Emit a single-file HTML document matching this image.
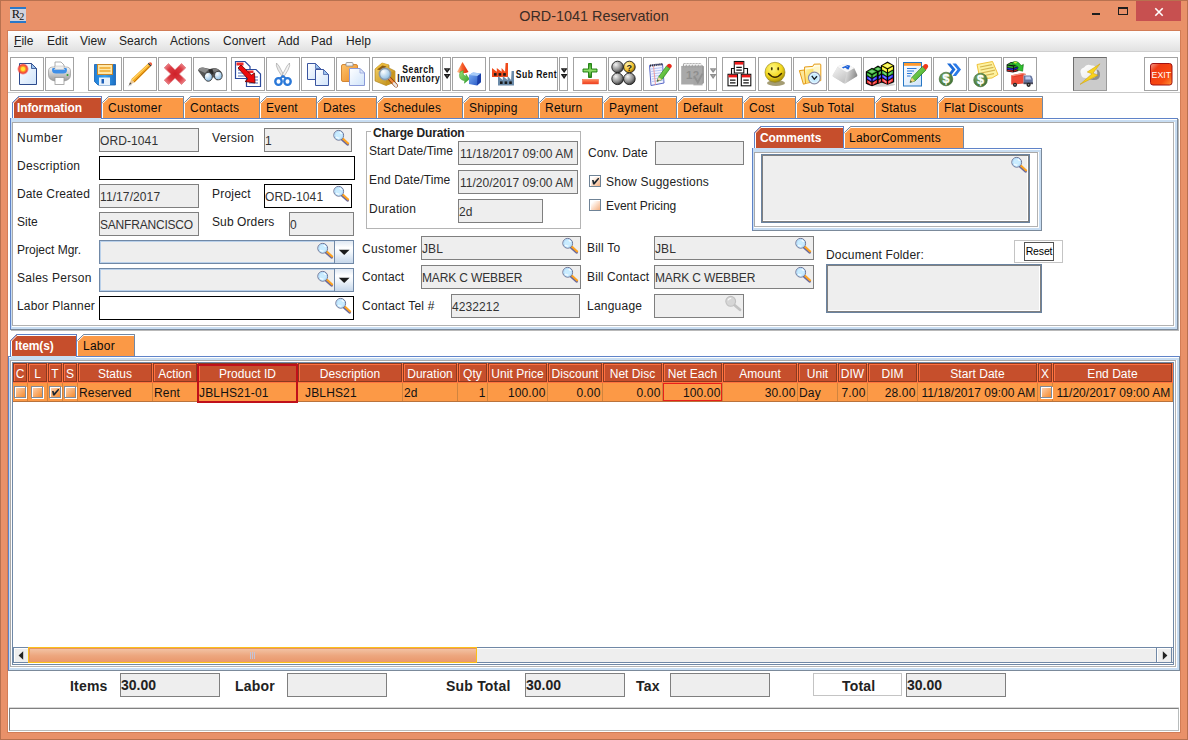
<!DOCTYPE html><html><head><meta charset="utf-8"><title>ORD-1041 Reservation</title><style>
*{box-sizing:border-box;margin:0;padding:0}
html,body{width:1188px;height:740px;overflow:hidden}
body{background:#E99169;font-family:"Liberation Sans",Arial,sans-serif;font-size:12px;color:#222;position:relative;letter-spacing:0.25px}
.a{position:absolute}
.t{position:absolute;white-space:nowrap;line-height:14px;height:14px}
.b{font-weight:bold}
#frame{left:0;top:0;width:1188px;height:740px;border:1px solid #B8714F;border-bottom-color:#B8714F}
#title{left:0;top:5.5px;width:1188px;text-align:center;font-size:14.4px;line-height:20px;height:20px;color:#3a2c26;letter-spacing:0}
#client{left:8px;top:31px;width:1172px;height:701px;background:#fff;overflow:hidden;box-shadow:0 0 0 1px #d27d57}
#menubar{left:0;top:0;width:1172px;height:21px;background:linear-gradient(#ffffff,#f4f4f4 40%,#e2e2e2);border-bottom:1px solid #cfcfcf}
#menubar .t{top:3px;font-size:12px;line-height:14px;height:14px;letter-spacing:0.05px;color:#222}
#toolbar{left:0;top:21px;width:1172px;height:41px;background:#fff;border-bottom:1px solid #c9c9c9}
.tb{position:absolute;top:5px;height:34px;width:34px;border:1px solid #a3a3a3;background:#fff}
.tb svg{position:absolute;left:0;top:0}
.fld{position:absolute;height:24px;border:1px solid #7f7f7f;background:#eeeeee;padding:5px 0 0 0;line-height:14px;white-space:nowrap;overflow:hidden;color:#333;letter-spacing:0.1px}
.wfld{background:#fff;border-color:#000}
.bfld{border-color:#7a9cc4;background:#eeeeee}
.tab{position:absolute;height:22px;top:0}
.tab svg{position:absolute;left:0;top:0}
.tab span{position:absolute;left:6px;top:5px;line-height:14px;white-space:nowrap;color:#0a0a0a}
.tab.sel span{color:#fff;font-weight:bold;letter-spacing:-0.1px;left:5px}
.th{position:absolute;top:0;height:19px;background:#C64F2C;color:#fff;text-align:center;line-height:14px;padding-top:3px;border:1px solid #8c3a20;box-shadow:inset 1px 1px 0 #ff7040;white-space:nowrap;overflow:hidden;letter-spacing:0.03px}
.td{position:absolute;top:20px;height:18px;color:#111;line-height:14px;padding-top:2.5px;border-right:1px solid #cf843f;white-space:nowrap;overflow:hidden;padding-left:1px;letter-spacing:0.15px}
.td.r{text-align:right;padding-right:1.5px}
.cb{position:absolute;width:12px;height:12px;border:1px solid #7f8a99;background:linear-gradient(135deg,#fccaa4 15%,#f7923a 90%);box-shadow:1px 1px 0 #fff, inset 1px 1px 0 #fff}
.cbf{background:linear-gradient(135deg,#ffffff 22%,#f6b588 95%);border-color:#6f8396;box-shadow:inset 1px 1px 0 #fff}
.tot{position:absolute;font-weight:bold;font-size:14px;line-height:16px;white-space:nowrap;letter-spacing:0.2px;color:#222}
</style></head><body>
<div id="frame" class="a"></div>
<div class="a" style="left:10px;top:7px;width:16px;height:16px;background:#d3d3dc;border-top:2px solid #2a78c8;border-bottom:2px solid #2a78c8;font-family:'Liberation Serif',serif;font-size:12.5px;line-height:11px;color:#111;letter-spacing:-0.8px;text-align:center;overflow:hidden"><span style="position:relative;top:0px;left:-0.5px">R<span style="font-size:10px;position:relative;top:1.5px">2</span></span></div>
<div id="title" class="a">ORD-1041 Reservation</div>
<div class="a" style="left:1092px;top:13px;width:8px;height:2px;background:#1e1e1e"></div>
<div class="a" style="left:1118px;top:7px;width:10px;height:8px;border:1px solid #1e1e1e;border-top-width:2px"></div>
<div class="a" style="left:1136px;top:1px;width:45px;height:20px;background:#C75050"></div>
<svg class="a" style="left:1154px;top:7px" width="10" height="10" viewBox="0 0 10 10"><path d="M1.3 1.3 L8.7 8.7 M8.7 1.3 L1.3 8.7" stroke="#fff" stroke-width="1.6" fill="none"/></svg>
<div id="client" class="a">
<div id="menubar" class="a">
<div class="t" style="left:6px"><u>F</u>ile</div>
<div class="t" style="left:39px">Edit</div>
<div class="t" style="left:72px">View</div>
<div class="t" style="left:111px">Search</div>
<div class="t" style="left:162px">Actions</div>
<div class="t" style="left:215px">Convert</div>
<div class="t" style="left:270px">Add</div>
<div class="t" style="left:303px">Pad</div>
<div class="t" style="left:338px">Help</div>
</div>
<div id="toolbar" class="a">
<svg width="0" height="0" style="position:absolute"><defs>
<linearGradient id="gDoc" x1="0" y1="0" x2="1" y2="1"><stop offset="0" stop-color="#ffffff"/><stop offset="1" stop-color="#cfe3fa"/></linearGradient>
<linearGradient id="gBlue" x1="0" y1="0" x2="1" y2="0"><stop offset="0" stop-color="#1f7fd8"/><stop offset="0.5" stop-color="#3aa0ee"/><stop offset="1" stop-color="#1b6fc4"/></linearGradient>
<linearGradient id="gGrayV" x1="0" y1="0" x2="0" y2="1"><stop offset="0" stop-color="#fafafa"/><stop offset="1" stop-color="#9a9a9a"/></linearGradient>
<radialGradient id="gRedX" cx="0.5" cy="0.5" r="0.6"><stop offset="0" stop-color="#cf1f28"/><stop offset="0.6" stop-color="#db3a42"/><stop offset="1" stop-color="#ee8a8e"/></radialGradient>
<radialGradient id="gSun" cx="0.5" cy="0.5" r="0.5"><stop offset="0" stop-color="#ffe838"/><stop offset="0.35" stop-color="#ffb020"/><stop offset="0.7" stop-color="#f0403a"/><stop offset="1" stop-color="#f0403a" stop-opacity="0"/></radialGradient>
<radialGradient id="gBall" cx="0.35" cy="0.3" r="0.8"><stop offset="0" stop-color="#f4f4f4"/><stop offset="0.6" stop-color="#8a8a8a"/><stop offset="1" stop-color="#222"/></radialGradient>
<radialGradient id="gBallY" cx="0.35" cy="0.3" r="0.8"><stop offset="0" stop-color="#fff4b0"/><stop offset="0.6" stop-color="#f3c029"/><stop offset="1" stop-color="#6a4a00"/></radialGradient>
<radialGradient id="gSmile" cx="0.4" cy="0.3" r="0.8"><stop offset="0" stop-color="#fffb8a"/><stop offset="0.55" stop-color="#f2d61c"/><stop offset="1" stop-color="#8a7400"/></radialGradient>
<radialGradient id="gLens" cx="0.35" cy="0.3" r="0.8"><stop offset="0" stop-color="#ffffff"/><stop offset="1" stop-color="#7db4e0"/></radialGradient>
<linearGradient id="gOrange" x1="0" y1="0" x2="1" y2="1"><stop offset="0" stop-color="#ffc36a"/><stop offset="1" stop-color="#e88a28"/></linearGradient>
<linearGradient id="gGold" x1="0" y1="0" x2="1" y2="1"><stop offset="0" stop-color="#f7d36a"/><stop offset="1" stop-color="#b8860f"/></linearGradient>
<linearGradient id="gGreenP" x1="0" y1="0" x2="0" y2="1"><stop offset="0" stop-color="#2f9a1c"/><stop offset="0.5" stop-color="#8fdc6a"/><stop offset="1" stop-color="#1f7f10"/></linearGradient>
<linearGradient id="gRedM" x1="0" y1="0" x2="0" y2="1"><stop offset="0" stop-color="#ff8a5a"/><stop offset="1" stop-color="#ee3a1a"/></linearGradient>
<linearGradient id="gCubeB" x1="0" y1="0" x2="1" y2="1"><stop offset="0" stop-color="#7fb2f5"/><stop offset="1" stop-color="#1f4fc0"/></linearGradient>
<linearGradient id="gCone" x1="0" y1="0" x2="1" y2="0"><stop offset="0" stop-color="#ffc89a"/><stop offset="0.45" stop-color="#f8602a"/><stop offset="1" stop-color="#d8260c"/></linearGradient>
<linearGradient id="gGreenA" x1="0" y1="0" x2="1" y2="1"><stop offset="0" stop-color="#9be07a"/><stop offset="1" stop-color="#2fa02a"/></linearGradient>
<linearGradient id="gExit" x1="0" y1="0" x2="1" y2="1"><stop offset="0" stop-color="#f4a090"/><stop offset="0.25" stop-color="#f03a12"/><stop offset="0.7" stop-color="#f84a10"/><stop offset="1" stop-color="#ff9838"/></linearGradient>
<radialGradient id="gDollar" cx="0.4" cy="0.35" r="0.7"><stop offset="0" stop-color="#7fae6a"/><stop offset="1" stop-color="#3f6f34"/></radialGradient>
<linearGradient id="gKey" x1="0" y1="0" x2="1" y2="1"><stop offset="0" stop-color="#ffffff"/><stop offset="1" stop-color="#9c9c9c"/></linearGradient>
<linearGradient id="gFolder" x1="0" y1="0" x2="1" y2="1"><stop offset="0" stop-color="#fff2b0"/><stop offset="1" stop-color="#f0c24a"/></linearGradient>
<linearGradient id="gPencilG" x1="0" y1="0" x2="1" y2="1"><stop offset="0" stop-color="#9be86a"/><stop offset="1" stop-color="#2f9a1c"/></linearGradient>
<linearGradient id="gCloud" x1="0" y1="0" x2="1" y2="1"><stop offset="0" stop-color="#ffffff"/><stop offset="0.6" stop-color="#f2f2f2"/><stop offset="1" stop-color="#bdbdbd"/></linearGradient>
<linearGradient id="gKeyR" x1="0" y1="0" x2="1" y2="0.3"><stop offset="0" stop-color="#f2f2f2"/><stop offset="1" stop-color="#8c8c8c"/></linearGradient>
<linearGradient id="gKeyL" x1="0" y1="0" x2="0.6" y2="1"><stop offset="0" stop-color="#f4f4f4"/><stop offset="1" stop-color="#c4c4c4"/></linearGradient>
<linearGradient id="gFolder2" x1="0" y1="0" x2="1" y2="1"><stop offset="0" stop-color="#fff6a8"/><stop offset="1" stop-color="#f8cc3a"/></linearGradient>
</defs></svg>
<div class="tb" style="left:2px;width:34px;"><svg style="left:-1px;top:-1px" width="34" height="34" viewBox="0 0 34 34"><path d="M9.5 6.5 H21.5 L26.5 11.5 V27.5 H9.5 Z" fill="url(#gDoc)" stroke="#2c4a8c" stroke-width="1"/><path d="M21.5 6.5 V11.5 H26.5 Z" fill="#9cc4ee" stroke="#2c4a8c" stroke-width="0.8"/><circle cx="13" cy="12" r="6" fill="url(#gSun)"/><circle cx="13" cy="12" r="2" fill="#ffe43a"/></svg></div>
<div class="tb" style="left:37px;width:29px;"><svg style="left:-1px;top:-1px" width="29" height="34" viewBox="0 0 29 34"><path d="M10 5 H16 L19 8 V13 H10 Z" fill="#fff" stroke="#9a9a9a" stroke-width="0.8"/><path d="M3.5 14 Q3.5 10 8 10 H21 Q25.5 10 25.5 14 V18 Q25.5 23 19 24 H10 Q3.5 23 3.5 18 Z" fill="url(#gGrayV)" stroke="#8a8a8a" stroke-width="0.6"/><path d="M8 11 H21 Q22 11 22 13 Q22 16.5 18 16.5 H11 Q7 16.5 7 13 Q7 11 8 11Z" fill="#3f8fe8"/><path d="M9 12 H20 V13 H9Z" fill="#8fc4ff"/><rect x="10" y="9" width="9" height="3.5" fill="#eee" stroke="#aaa" stroke-width="0.4"/><circle cx="22.5" cy="18" r="1" fill="#2fa02a"/><rect x="10" y="20.5" width="9" height="7" fill="#fff" stroke="#9a9a9a" stroke-width="0.8"/></svg></div>
<div class="tb" style="left:80px;width:34px;"><svg style="left:-1px;top:-1px" width="34" height="34" viewBox="0 0 34 34"><path d="M6.5 7.5 H27.5 V28 H10 L6.5 24.5 Z" fill="url(#gBlue)" stroke="#1560b0" stroke-width="0.8"/><rect x="9.5" y="7.5" width="15" height="10" fill="#ffe7a8" stroke="#c8882a" stroke-width="1"/><path d="M11.5 11 H22.5 M11.5 14 H22.5" stroke="#f0a82a" stroke-width="1.6"/><rect x="11" y="20.5" width="11" height="7.5" fill="#e8f2fc"/><rect x="13.5" y="22" width="2.5" height="4.5" fill="#1f60b8"/></svg></div>
<div class="tb" style="left:115px;width:34px;"><svg style="left:-1px;top:-1px" width="34" height="34" viewBox="0 0 34 34"><path d="M6 28 L8.2 22.2 L11.6 25.6 Z" fill="#e8c89a"/><path d="M6 28 L7 25.3 L8.6 26.9 Z" fill="#444"/><path d="M9 27.5 L5 29" stroke="#ccc" stroke-width="1.2" opacity="0.7"/><path d="M8.2 22.2 L24.8 6.8 L27.6 9.6 L11.6 25.6 Z" fill="#f5a81c"/><path d="M9.2 23 L25.6 7.7" stroke="#ffd66a" stroke-width="1.1"/><path d="M11 25 L27.2 9" stroke="#b86a0a" stroke-width="0.9"/><path d="M24.8 6.8 L25.8 5.8 L28.6 8.6 L27.6 9.6 Z" fill="#333"/><path d="M25.8 5.8 Q27.2 4.6 28.6 5.8 Q29.8 7.2 28.6 8.6 Z" fill="#f05a3a"/></svg></div>
<div class="tb" style="left:150px;width:34px;"><svg style="left:-1px;top:-1px" width="34" height="34" viewBox="0 0 34 34"><path d="M10.5 6.5 L17 12.8 L23.5 6.5 L27.8 10.8 L21.3 17 L27.8 23.2 L23.5 27.5 L17 21.2 L10.5 27.5 L6.2 23.2 L12.7 17 L6.2 10.8 Z" fill="url(#gRedX)" stroke="#e07a80" stroke-width="0.8" stroke-linejoin="round"/></svg></div>
<div class="tb" style="left:185px;width:34px;"><svg style="left:-1px;top:-1px" width="34" height="34" viewBox="0 0 34 34"><path d="M5 13.5 Q6 10 10 10.5 L17 12 L21 11 Q25 11 28.5 15 L29.5 19 L24 23.5 L20 20 L19 21 L15 24.5 L10.5 21 Z" fill="#555"/><path d="M5.5 13 Q7 10 10.5 10.8 L16 12.3 L12 16 Z" fill="#8c8c8c"/><path d="M17.5 12 L21.5 11.2 Q24 11.2 26 13 L22 15.5 Z" fill="#7c7c7c"/><path d="M15.5 12.5 L19.5 12 L20.5 17 L17 18 Z" fill="#2a2a2a"/><ellipse cx="15.3" cy="19.8" rx="4" ry="4.4" fill="url(#gLens)" stroke="#444" stroke-width="1"/><ellipse cx="25.3" cy="18.6" rx="3.8" ry="4.2" fill="url(#gLens)" stroke="#444" stroke-width="1"/></svg></div>
<div class="tb" style="left:223px;width:34px;"><svg style="left:-1px;top:-1px" width="34" height="34" viewBox="0 0 34 34"><path d="M4.5 4.5 H14 L19 9.5 V21.5 H4.5 Z" fill="#fff" stroke="#2c4a9c" stroke-width="1.2"/><rect x="5.5" y="5.5" width="7" height="3" fill="#ee2a2a"/><path d="M7 13 H16 M7 16 H16 M7 19 H16" stroke="#4a6ab8" stroke-width="1"/><path d="M15.5 12.5 H25 L29.5 17 V29.5 H15.5 Z" fill="#fff" stroke="#2c4a9c" stroke-width="1.2"/><rect x="16.5" y="13.5" width="6" height="2.5" fill="#ee2a2a"/><path d="M18 20 H27 M18 23 H27 M18 26 H27" stroke="#4a6ab8" stroke-width="1"/><path d="M7 11 L10 8 L20.5 18 L23.5 16 L24 26 L14 24.5 L17 22 Z" fill="#ee0a0a" stroke="#5a0000" stroke-width="0.8"/></svg></div>
<div class="tb" style="left:258px;width:34px;"><svg style="left:-1px;top:-1px" width="34" height="34" viewBox="0 0 34 34"><path d="M10.5 6 Q9.5 8 12 13 L17 21 L18.5 19.5 L13 9 Z" fill="#e8e8e8" stroke="#9a9a9a" stroke-width="0.6"/><path d="M23.5 6 Q24.5 8 22 13 L17 21 L15.5 19.5 L21 9 Z" fill="#f4f4f4" stroke="#9a9a9a" stroke-width="0.6"/><ellipse cx="12.5" cy="24.5" rx="3.2" ry="3.4" fill="none" stroke="#2a78d8" stroke-width="2.4"/><ellipse cx="21.5" cy="24.5" rx="3.2" ry="3.4" fill="none" stroke="#2a78d8" stroke-width="2.4"/><path d="M14 21.5 L17 19 L20 21.5" stroke="#2a78d8" stroke-width="2" fill="none"/></svg></div>
<div class="tb" style="left:293px;width:34px;"><svg style="left:-1px;top:-1px" width="34" height="34" viewBox="0 0 34 34"><path d="M6.5 6.5 H14.5 L19.5 11.5 V22.5 H6.5 Z" fill="url(#gDoc)" stroke="#3a55a0" stroke-width="1"/><path d="M14.5 6.5 V11.5 H19.5 Z" fill="#9cc4ee" stroke="#3a55a0" stroke-width="0.7"/><path d="M14.5 12.5 H22.5 L27.5 17.5 V28.5 H14.5 Z" fill="url(#gDoc)" stroke="#3a55a0" stroke-width="1"/><path d="M22.5 12.5 V17.5 H27.5 Z" fill="#9cc4ee" stroke="#3a55a0" stroke-width="0.7"/></svg></div>
<div class="tb" style="left:328px;width:34px;"><svg style="left:-1px;top:-1px" width="34" height="34" viewBox="0 0 34 34"><rect x="5.5" y="7.5" width="16" height="17" rx="1.5" fill="url(#gOrange)" stroke="#c8741a" stroke-width="0.8"/><path d="M10 9 V6.5 Q10 5.5 11 5.5 H16 Q17 5.5 17 6.5 V9 Z" fill="#f4f4f4" stroke="#8a8a8a" stroke-width="0.8"/><path d="M13.5 11.5 H24 L28.5 16 V28.5 H13.5 Z" fill="url(#gDoc)" stroke="#8a9ad8" stroke-width="1"/><path d="M24 11.5 V16 H28.5 Z" fill="#dfeafa" stroke="#8a9ad8" stroke-width="0.7"/></svg></div>
<div class="tb" style="left:364px;width:69px;"><svg style="left:-1px;top:-1px" width="69" height="34" viewBox="0 0 69 34"><path d="M3 12 L10 6 L17 8 L17 11 L23 14 L23 25 L14 28.5 L3 24 Z" fill="url(#gGold)" stroke="#a87a10" stroke-width="0.6"/><path d="M3 12 L10 6 L17 8 L10 13 Z" fill="#e8b83a"/><path d="M5 12.5 L10.5 8.5 L14.5 9.5 L9.5 13.5 Z" fill="#8a5a10"/><path d="M14 28.5 L14 17 L23 14 L23 25 Z" fill="#c8961f"/><path d="M17 21 L24 28.5" stroke="#8a3a10" stroke-width="4" stroke-linecap="round"/><path d="M17 21 L24 28.5" stroke="#f08a3a" stroke-width="2.4" stroke-linecap="round"/><path d="M22 26.5 L24 28.7" stroke="#e8e8e8" stroke-width="2.6" stroke-linecap="round"/><circle cx="13" cy="17" r="5.6" fill="url(#gLens)" stroke="#8a9aaa" stroke-width="1.6"/><text transform="translate(30.2 15.6) scale(0.86 1.04)" font-family="Liberation Sans,Arial,sans-serif" font-weight="bold" font-size="10" fill="#111" lengthAdjust="spacing" textLength="37">Search</text><text transform="translate(25.3 24.6) scale(0.86 1.04)" font-family="Liberation Sans,Arial,sans-serif" font-weight="bold" font-size="10" fill="#111" lengthAdjust="spacing" textLength="49.6">Inventory</text></svg></div>
<div class="tb" style="left:434px;width:9px;"><svg style="left:-1px;top:-1px" width="9" height="34" viewBox="0 0 9 34"><path d="M2.1 11.2 H8.1 V11.9 L5.1 15.9 L2.1 11.9 Z" fill="#1a1a1a"/><path d="M2.1 17.1 H8.1 V17.8 L5.1 21.9 L2.1 17.8 Z" fill="#1a1a1a"/><path d="M4.5 12.6 H5.7 L5.1 13.5 Z M4.5 18.5 H5.7 L5.1 19.4 Z" fill="#fff" opacity="0.9"/></svg></div>
<div class="tb" style="left:444px;width:34px;"><svg style="left:-1px;top:-1px" width="34" height="34" viewBox="0 0 34 34"><path d="M10.5 5 L16.5 15 Q11 17.5 5 15 Z" fill="url(#gCone)"/><path d="M8.2 14.8 L11.4 13.6 Q10.2 18.4 14 19.4 L14 17.2 L17.4 22 L12.4 26.2 L12.8 23.8 Q5.4 22.8 8.2 14.8 Z" fill="url(#gGreenA)" stroke="#2f9a22" stroke-width="0.5"/><path d="M17 18 L21 15.5 L29 16.5 L29 25 L25 28.5 L17 27 Z" fill="url(#gCubeB)"/><path d="M17 18 L21 15.5 L29 16.5 L25.5 19 Z" fill="#a8ccf8"/><path d="M25.5 19 L29 16.5 L29 25 L25 28.5 Z" fill="#1a3fa8"/></svg></div>
<div class="tb" style="left:481px;width:69px;"><svg style="left:-1px;top:-1px" width="69" height="34" viewBox="0 0 69 34"><path d="M3 20 V10.899999999999999 L7.8 14.68 V10.899999999999999 L12.6 14.68 V10.899999999999999 L16.066666666666666 14.68 L16.599999999999998 6 H19 V20 Z" fill="#f04a1a"/><rect x="5.0" y="16.1" width="2.6" height="2.6" fill="#1a1a1a"/><rect x="9.6" y="16.1" width="2.6" height="2.6" fill="#1a1a1a"/><rect x="14.2" y="16.1" width="2.6" height="2.6" fill="#1a1a1a"/><path d="M9 28.5 V19.075 L13.8 22.990000000000002 V19.075 L18.6 22.990000000000002 V19.075 L22.066666666666666 22.990000000000002 L22.599999999999998 14 H25 V28.5 Z" fill="#6a8aa8"/><rect x="11.0" y="24.4" width="2.6" height="2.6" fill="#1a1a1a"/><rect x="15.6" y="24.4" width="2.6" height="2.6" fill="#1a1a1a"/><rect x="20.2" y="24.4" width="2.6" height="2.6" fill="#1a1a1a"/><text transform="translate(26.8 20.8) scale(0.86 1.04)" font-family="Liberation Sans,Arial,sans-serif" font-weight="bold" font-size="10" fill="#111" lengthAdjust="spacing" textLength="47.6">Sub Rent</text></svg></div>
<div class="tb" style="left:551px;width:9px;"><svg style="left:-1px;top:-1px" width="9" height="34" viewBox="0 0 9 34"><path d="M2.1 11.2 H8.1 V11.9 L5.1 15.9 L2.1 11.9 Z" fill="#1a1a1a"/><path d="M2.1 17.1 H8.1 V17.8 L5.1 21.9 L2.1 17.8 Z" fill="#1a1a1a"/><path d="M4.5 12.6 H5.7 L5.1 13.5 Z M4.5 18.5 H5.7 L5.1 19.4 Z" fill="#fff" opacity="0.9"/></svg></div>
<div class="tb" style="left:565px;width:34px;"><svg style="left:-1px;top:-1px" width="34" height="34" viewBox="0 0 34 34"><path d="M15.5 6.5 H18.5 V12 H24 V15 H18.5 V20.5 H15.5 V15 H10 V12 H15.5 Z" fill="url(#gGreenP)" stroke="#1a7a0a" stroke-width="0.9"/><rect x="9.5" y="22.5" width="16" height="4.5" fill="url(#gRedM)" stroke="#ee5a3a" stroke-width="0.5"/></svg></div>
<div class="tb" style="left:600px;width:34px;"><svg style="left:-1px;top:-1px" width="34" height="34" viewBox="0 0 34 34"><circle cx="9.6" cy="10" r="5.8" fill="url(#gBall)" stroke="#1a1a1a" stroke-width="0.9"/><circle cx="21.4" cy="10" r="5.8" fill="url(#gBallY)" stroke="#1a1a1a" stroke-width="0.9"/><circle cx="9.6" cy="21.8" r="5.8" fill="url(#gBall)" stroke="#1a1a1a" stroke-width="0.9"/><circle cx="21.4" cy="21.8" r="5.8" fill="url(#gBall)" stroke="#1a1a1a" stroke-width="0.9"/><text x="18.6" y="13.6" font-family="Liberation Sans,Arial,sans-serif" font-weight="bold" font-size="9" fill="#222">?</text></svg></div>
<div class="tb" style="left:635px;width:34px;"><svg style="left:-1px;top:-1px" width="34" height="34" viewBox="0 0 34 34"><path d="M6.5 8.5 L19.5 7 L21 26 L8 28.5 Z" fill="#f4f4ff" stroke="#5a6ac8" stroke-width="1"/><path d="M8 12 L19.8 10.5 M8.2 14.5 L20 13 M8.4 17 L20.2 15.5 M8.6 19.5 L20.4 18 M8.8 22 L20.6 20.5 M9 24.5 L20.8 23" stroke="#9ab0f0" stroke-width="0.7"/><path d="M10.5 9 L12.5 28" stroke="#f08a8a" stroke-width="0.8"/><path d="M7 8.6 L19.5 7.2" stroke="#2a2a2a" stroke-width="2.2" stroke-dasharray="1 0.9"/><path d="M14 24.5 L15.5 20 L23.5 9 L27 11.5 L19 22.5 Z" fill="url(#gPencilG)" stroke="#1a7a0a" stroke-width="0.6"/><path d="M14 24.5 L15.5 20 L19 22.5 Z" fill="#f0d8a8"/><path d="M14 24.5 L14.6 22.6 L16 23.6 Z" fill="#333"/><path d="M23.5 9 Q25.5 5.5 28 7.5 Q30 9.5 27 11.5 Z" fill="#e82a1a"/></svg></div>
<div class="tb" style="left:670px;width:29px;"><svg style="left:-1px;top:-1px" width="29" height="34" viewBox="0 0 29 34"><path d="M3.2 9 L24 8.2 L25.8 9.6 L25.8 26 L23.5 27.4 L3.2 27.4 Z" fill="#a9a9a9"/><path d="M24 8.2 L25.8 9.6 L25.8 26 L24 27 Z" fill="#9a9a9a"/><path d="M6 10.5 Q4.6 6.6 7 6.6 Q8.4 6.6 7.6 10.5 M9 10.5 Q7.6 6.6 10 6.6 Q11.4 6.6 10.6 10.5 M12 10.5 Q10.6 6.6 13 6.6 Q14.4 6.6 13.6 10.5 M15 10.5 Q13.6 6.6 16 6.6 Q17.4 6.6 16.6 10.5 M18 10.5 Q16.6 6.6 19 6.6 Q20.4 6.6 19.6 10.5 M21 10.5 Q19.6 6.6 22 6.6 Q23.4 6.6 22.6 10.5" stroke="#a2a2a2" stroke-width="1.3" fill="none"/><path d="M6.6 7.6 h1.4 M9.6 7.6 h1.4 M12.6 7.6 h1.4 M15.6 7.6 h1.4 M18.6 7.6 h1.4 M21.6 7.6 h1.4" stroke="#f2f2f2" stroke-width="1.6" stroke-linecap="round"/><text x="8" y="22" font-family="Liberation Sans,Arial,sans-serif" font-weight="bold" font-size="11.5" fill="#8e8e8e" letter-spacing="0.4">12</text><path d="M15.4 18.4 H24.6 V28.4 H15.4 Z" fill="#a4a4a4" opacity="0.85"/><path d="M16 19 L19.8 25.4 L24.4 16.6" stroke="#909090" stroke-width="1.9" fill="none"/></svg></div>
<div class="tb" style="left:700px;width:9px;"><svg style="left:-1px;top:-1px" width="9" height="34" viewBox="0 0 9 34"><path d="M2.1 11.2 H8.1 V11.9 L5.1 15.9 L2.1 11.9 Z" fill="#8f8f8f"/><path d="M2.1 17.1 H8.1 V17.8 L5.1 21.9 L2.1 17.8 Z" fill="#8f8f8f"/><path d="M4.5 12.6 H5.7 L5.1 13.5 Z M4.5 18.5 H5.7 L5.1 19.4 Z" fill="#fff" opacity="0.9"/></svg></div>
<div class="tb" style="left:714px;width:34px;"><svg style="left:-1px;top:-1px" width="34" height="34" viewBox="0 0 34 34"><path d="M9.5 17.5 V11.5 H25.5 V17.5" fill="none" stroke="#111" stroke-width="1.1"/><rect x="12.3" y="4.5" width="9.5" height="11.5" fill="#fff" stroke="#111" stroke-width="1.1"/><rect x="12.8" y="5.0" width="8.5" height="2.6" fill="#ee1a1a"/><path d="M14.3 10.3 H19.8 M14.3 13.1 H19.8" stroke="#111" stroke-width="1.2"/><rect x="6" y="17.3" width="9.5" height="11.5" fill="#fff" stroke="#111" stroke-width="1.1"/><rect x="6.5" y="17.8" width="8.5" height="2.6" fill="#ee1a1a"/><path d="M8 23.1 H13.5 M8 25.9 H13.5" stroke="#111" stroke-width="1.2"/><rect x="19.3" y="17.3" width="9.5" height="11.5" fill="#fff" stroke="#111" stroke-width="1.1"/><rect x="19.8" y="17.8" width="8.5" height="2.6" fill="#ee1a1a"/><path d="M21.3 23.1 H26.8 M21.3 25.9 H26.8" stroke="#111" stroke-width="1.2"/></svg></div>
<div class="tb" style="left:750px;width:34px;"><svg style="left:-1px;top:-1px" width="34" height="34" viewBox="0 0 34 34"><ellipse cx="18" cy="26" rx="9" ry="3" fill="#5a4a00" opacity="0.55"/><circle cx="17" cy="15.3" r="10" fill="url(#gSmile)" stroke="#8a7a10" stroke-width="0.6"/><ellipse cx="13.8" cy="11.8" rx="0.9" ry="1.8" fill="#4a3a00"/><ellipse cx="20.2" cy="11.8" rx="0.9" ry="1.8" fill="#4a3a00"/><path d="M10.5 16.5 Q17 24 23.5 16.5" stroke="#3a2a00" stroke-width="1.4" fill="none" stroke-linecap="round"/></svg></div>
<div class="tb" style="left:785px;width:34px;"><svg style="left:-1px;top:-1px" width="34" height="34" viewBox="0 0 34 34"><path d="M11.6 10 L19.8 9.4 L21 7.2 L27 7 Q27.8 7 27.8 8 L27.8 23.6 L11.6 26.5 Z" fill="#fffbe2" stroke="#e59a12" stroke-width="1"/><path d="M12.6 12.4 L20.5 11.4 L20.5 24.2 L12.6 25.8 Z" fill="url(#gFolder2)"/><path d="M21 10 L26.6 9.6 L26.6 22.8 L21 24 Z" fill="#fff6c8"/><path d="M6.4 13.6 L11.4 13 L12.6 26.6 L10.4 27.2 Z" fill="#fce79a" stroke="#e59a12" stroke-width="1" stroke-linejoin="round"/><circle cx="21.3" cy="21" r="5.8" fill="#c9ecff" stroke="#8a8ca6" stroke-width="1.2"/><circle cx="21.3" cy="21" r="4.6" fill="none" stroke="#e6f7ff" stroke-width="0.8"/><path d="M18.8 18.8 L21.3 22.3 L24 19.3" stroke="#15181c" stroke-width="1.3" fill="none"/></svg></div>
<div class="tb" style="left:820px;width:34px;"><svg style="left:-1px;top:-1px" width="34" height="34" viewBox="0 0 34 34"><path d="M9.3 10.2 Q9.8 9.2 11 8.8 L15.6 7.2 Q16.6 6.9 17.6 7.2 L25 10.2 Q26 10.7 26.4 11.6 L29.2 17.6 Q29.6 18.8 28.6 19.6 L17.6 26.2 Q16.4 26.8 15.4 26.1 L5.2 19.8 Q4.2 19 4.8 17.9 Z" fill="#dcdcdc"/><path d="M19 15.3 L26.2 11.2 L29.3 18 Q29.6 18.9 28.6 19.6 L17.6 26.2 Q16.9 26.6 16.4 26.5 Z" fill="url(#gKeyR)"/><path d="M9.3 10.4 L19 15.3 L16.4 26.5 Q15.8 26.4 15.4 26.1 L5.2 19.8 Q4.2 19 4.8 17.9 Z" fill="url(#gKeyL)"/><path d="M9.6 10 Q10 9.2 11 8.8 L15.6 7.2 Q16.6 6.9 17.6 7.2 L25 10.2 Q25.8 10.6 26 11 L19 15.2 Z" fill="#f7f7f7"/><path d="M13.8 10.4 L19.6 8 L22.2 8.8 L20.6 12.6 L18.2 12 L18.6 11 L16.6 10.8 L15.4 11.4 Z M18 9.6 L19.4 10 L19.8 9.2 Z" fill="#1f62d8" fill-rule="evenodd"/></svg></div>
<div class="tb" style="left:855px;width:34px;"><svg style="left:-1px;top:-1px" width="34" height="34" viewBox="0 0 34 34"><ellipse cx="18" cy="27.5" rx="14" ry="2.2" fill="#000" opacity="0.18"/><path d="M9.4 12.0 L15.0 8.6 L20.6 12.0 V24.82 L15.0 27.1 L9.4 24.82 Z" fill="#050505"/><path d="M10.8 12.0 L15.0 9.899999999999999 L19.2 12.0 L15.0 14.100000000000001 Z" fill="#2fae2f"/><path d="M12.5 12.0 L15.0 10.799999999999999 L17.5 12.0 L15.0 13.200000000000001 Z" fill="#b4ecb4" opacity="0.55"/><path d="M10.6 13.0 L14.5 15.24 V18.28 L10.6 16.040000000000003 Z" fill="#2fae2f"/><path d="M12 14.1 L13.6 15.84 V17.28 L12 15.440000000000003 Z" fill="#b4ecb4" opacity="0.75"/><path d="M15.5 15.24 L19.4 13.0 V16.040000000000003 L15.5 18.28 Z" fill="#2fae2f"/><path d="M16.4 15.84 L18 14.1 V15.440000000000003 L16.4 17.28 Z" fill="#b4ecb4" opacity="0.6"/><path d="M10.6 16.94 L14.5 19.18 V22.220000000000006 L10.6 19.980000000000004 Z" fill="#2a2af0"/><path d="M12 18.040000000000003 L13.6 19.78 V21.220000000000006 L12 19.380000000000003 Z" fill="#c6c6ff" opacity="0.75"/><path d="M15.5 19.18 L19.4 16.94 V19.980000000000004 L15.5 22.220000000000006 Z" fill="#2a2af0"/><path d="M16.4 19.78 L18 18.040000000000003 V19.380000000000003 L16.4 21.220000000000006 Z" fill="#c6c6ff" opacity="0.6"/><path d="M10.6 20.88 L14.5 23.119999999999997 V26.160000000000004 L10.6 23.92 Z" fill="#f02a2a"/><path d="M12 21.98 L13.6 23.72 V25.160000000000004 L12 23.32 Z" fill="#ffc6c6" opacity="0.75"/><path d="M15.5 23.119999999999997 L19.4 20.88 V23.92 L15.5 26.160000000000004 Z" fill="#f02a2a"/><path d="M16.4 23.72 L18 21.98 V23.32 L16.4 25.160000000000004 Z" fill="#ffc6c6" opacity="0.6"/><path d="M2.8 14.536000000000001 L9.0 10.8 L15.2 14.536000000000001 V26.718400000000003 L9.0 29.200000000000003 L2.8 26.718400000000003 Z" fill="#050505"/><path d="M4.2 14.536000000000001 L9.0 12.1 L13.799999999999999 14.536000000000001 L9.0 16.972 Z" fill="#2fae2f"/><path d="M5.9 14.536000000000001 L9.0 13.0 L12.1 14.536000000000001 L9.0 16.072 Z" fill="#b4ecb4" opacity="0.55"/><path d="M4.0 15.536000000000001 L8.5 18.044800000000002 V20.872266666666672 L4.0 18.36346666666667 Z" fill="#2fae2f"/><path d="M5.4 16.636000000000003 L7.6 18.644800000000004 V19.872266666666672 L5.4 17.76346666666667 Z" fill="#b4ecb4" opacity="0.75"/><path d="M9.5 18.044800000000002 L14.0 15.536000000000001 V18.36346666666667 L9.5 20.872266666666672 Z" fill="#2fae2f"/><path d="M10.4 18.644800000000004 L12.6 16.636000000000003 V17.76346666666667 L10.4 19.872266666666672 Z" fill="#b4ecb4" opacity="0.6"/><path d="M4.0 19.26346666666667 L8.5 21.77226666666667 V24.59973333333334 L4.0 22.09093333333334 Z" fill="#2a2af0"/><path d="M5.4 20.36346666666667 L7.6 22.372266666666672 V23.59973333333334 L5.4 21.490933333333338 Z" fill="#c6c6ff" opacity="0.75"/><path d="M9.5 21.77226666666667 L14.0 19.26346666666667 V22.09093333333334 L9.5 24.59973333333334 Z" fill="#2a2af0"/><path d="M10.4 22.372266666666672 L12.6 20.36346666666667 V21.490933333333338 L10.4 23.59973333333334 Z" fill="#c6c6ff" opacity="0.6"/><path d="M4.0 22.990933333333334 L8.5 25.499733333333335 V28.327200000000005 L4.0 25.818400000000004 Z" fill="#f02a2a"/><path d="M5.4 24.090933333333336 L7.6 26.099733333333337 V27.327200000000005 L5.4 25.218400000000003 Z" fill="#ffc6c6" opacity="0.75"/><path d="M9.5 25.499733333333335 L14.0 22.990933333333334 V25.818400000000004 L9.5 28.327200000000005 Z" fill="#f02a2a"/><path d="M10.4 26.099733333333337 L12.6 24.090933333333336 V25.218400000000003 L10.4 27.327200000000005 Z" fill="#ffc6c6" opacity="0.6"/><path d="M17.799999999999997 8.616000000000001 L24.5 4.6000000000000005 L31.200000000000003 8.616000000000001 V25.150399999999998 L24.5 27.8 L17.799999999999997 25.150399999999998 Z" fill="#050505"/><path d="M19.2 8.616000000000001 L24.5 5.9 L29.8 8.616000000000001 L24.5 11.332000000000004 Z" fill="#f2ee20"/><path d="M20.9 8.616000000000001 L24.5 6.800000000000001 L28.1 8.616000000000001 L24.5 10.432000000000004 Z" fill="#ffffc0" opacity="0.55"/><path d="M19.0 9.616000000000001 L24.0 12.348800000000002 V15.332400000000002 L19.0 12.5996 Z" fill="#f2ee20"/><path d="M20.4 10.716000000000001 L23.1 12.948800000000002 V14.332400000000002 L20.4 11.999600000000001 Z" fill="#ffffc0" opacity="0.75"/><path d="M25.0 12.348800000000002 L30.0 9.616000000000001 V12.5996 L25.0 15.332400000000002 Z" fill="#f2ee20"/><path d="M25.9 12.948800000000002 L28.6 10.716000000000001 V11.999600000000001 L25.9 14.332400000000002 Z" fill="#ffffc0" opacity="0.6"/><path d="M19.0 13.499600000000001 L24.0 16.232400000000002 V19.216 L19.0 16.4832 Z" fill="#2fae2f"/><path d="M20.4 14.5996 L23.1 16.832400000000003 V18.216 L20.4 15.8832 Z" fill="#b4ecb4" opacity="0.75"/><path d="M25.0 16.232400000000002 L30.0 13.499600000000001 V16.4832 L25.0 19.216 Z" fill="#2fae2f"/><path d="M25.9 16.832400000000003 L28.6 14.5996 V15.8832 L25.9 18.216 Z" fill="#b4ecb4" opacity="0.6"/><path d="M19.0 17.3832 L24.0 20.116 V23.0996 L19.0 20.366799999999998 Z" fill="#2a2af0"/><path d="M20.4 18.4832 L23.1 20.716 V22.0996 L20.4 19.766799999999996 Z" fill="#c6c6ff" opacity="0.75"/><path d="M25.0 20.116 L30.0 17.3832 V20.366799999999998 L25.0 23.0996 Z" fill="#2a2af0"/><path d="M25.9 20.716 L28.6 18.4832 V19.766799999999996 L25.9 22.0996 Z" fill="#c6c6ff" opacity="0.6"/><path d="M19.0 21.266799999999996 L24.0 23.999599999999997 V26.983199999999997 L19.0 24.250399999999996 Z" fill="#f02a2a"/><path d="M20.4 22.366799999999998 L23.1 24.5996 V25.983199999999997 L20.4 23.650399999999994 Z" fill="#ffc6c6" opacity="0.75"/><path d="M25.0 23.999599999999997 L30.0 21.266799999999996 V24.250399999999996 L25.0 26.983199999999997 Z" fill="#f02a2a"/><path d="M25.9 24.5996 L28.6 22.366799999999998 V23.650399999999994 L25.9 25.983199999999997 Z" fill="#ffc6c6" opacity="0.6"/></svg></div>
<div class="tb" style="left:890px;width:34px;"><svg style="left:-1px;top:-1px" width="34" height="34" viewBox="0 0 34 34"><rect x="5.5" y="5.5" width="18" height="23.5" fill="url(#gDoc)" stroke="#2576c4" stroke-width="1"/><rect x="6" y="6" width="17" height="2.8" fill="#ff9a2e"/><path d="M9 11.5 H18.5 M9 14 H16 M9 16.5 H14 M9 19 H12.5" stroke="#2a78d8" stroke-width="1.1"/><path d="M12 25.5 L13.8 20.5 L24.5 9.5 L28 13 L17 24 Z" fill="url(#gPencilG)" stroke="#1a6a0a" stroke-width="0.6"/><path d="M12 25.5 L13.8 20.5 L17 24 Z" fill="#f2d27a"/><path d="M12 25.5 L12.7 23.5 L14 24.8 Z" fill="#333"/><path d="M24.5 9.5 L26.5 7.3 Q28.5 6.3 29.8 8 Q30.8 9.8 29.5 11 L28 13 Z" fill="#ee3a1a"/></svg></div>
<div class="tb" style="left:925px;width:34px;"><svg style="left:-1px;top:-1px" width="34" height="34" viewBox="0 0 34 34"><path d="M14 6.5 H17.5 L22.5 12.5 L17.5 19 H14 L19 12.5 Z" fill="#1a6ad8"/><path d="M19.5 6.5 H23 L28 12.5 L23 19 H19.5 L24.5 12.5 Z" fill="#2a7ae8"/><circle cx="13" cy="22" r="6.8" fill="url(#gDollar)" stroke="#3a6a30" stroke-width="0.6"/><text x="9.5" y="26.4" font-family="Liberation Sans,Arial,sans-serif" font-weight="bold" font-size="12.5" fill="#fff" stroke="#fff" stroke-width="0.35" letter-spacing="0">$</text></svg></div>
<div class="tb" style="left:960px;width:34px;"><svg style="left:-1px;top:-1px" width="34" height="34" viewBox="0 0 34 34"><path d="M9 7.5 L24.5 4.5 L30 17.5 L24 21 L12 22 Z" fill="#fdf2a0" stroke="#f0c23a" stroke-width="1"/><path d="M12 10 L24 7.6 M12.6 13 L25.5 10.4 M13.2 16 L27 13.2 M13.8 19 L26 16.6" stroke="#d4b550" stroke-width="1.2"/><circle cx="12.5" cy="23" r="6.8" fill="url(#gDollar)" stroke="#3a6a30" stroke-width="0.6"/><text x="9.0" y="27.4" font-family="Liberation Sans,Arial,sans-serif" font-weight="bold" font-size="12.5" fill="#fff" stroke="#fff" stroke-width="0.35" letter-spacing="0">$</text></svg></div>
<div class="tb" style="left:995px;width:34px;"><svg style="left:-1px;top:-1px" width="34" height="34" viewBox="0 0 34 34"><path d="M3.6 7.5 L8 5 L15.5 6 V14 L10 15.5 L3.6 14.5 Z" fill="#111"/><path d="M4.4 7.6 L8 5.7 L14.6 6.5 L10.5 8.2 Z" fill="#2fae2f"/><path d="M4.4 8.6 L10 9.4 V11 L4.4 10.2 Z" fill="#2fae2f"/><path d="M10.8 9.2 L14.8 7.6 V9.4 L10.8 11 Z" fill="#1f8e1f"/><path d="M4.4 10.9 L10 11.7 V13 L4.4 12.2 Z" fill="#2a2af0"/><path d="M10.8 11.6 L14.8 10 V11.4 L10.8 13 Z" fill="#1a1ac0"/><path d="M4.4 12.9 L10 13.7 V14.8 L4.4 14 Z" fill="#f02a2a"/><path d="M10.8 13.6 L14.8 12 V13.2 L10.8 14.8 Z" fill="#c01a1a"/><path d="M9.5 5.2 Q14.5 2.8 18.2 8.6 L20.4 7.4 L19.6 14.2 L13.4 12.6 L15.6 11 Q13.4 7.4 9.8 7.6 Z" fill="#2fc02f" stroke="#0f6a0f" stroke-width="0.6"/><ellipse cx="12.4" cy="5.6" rx="1.6" ry="0.8" fill="#d8e83a"/><path d="M8.2 18.2 L20.6 16 V26.6 L8.2 27.6 Z" fill="#ee4a36"/><path d="M8.2 18.2 L20.6 16 L22.8 16.8 L10.4 19.2 Z" fill="#f9907e"/><path d="M10.4 19.2 L22.8 16.8 V18 L10.4 20.2 Z" fill="#d8301e" opacity="0.6"/><path d="M20.6 18.4 L27.4 18.4 Q28.2 18.4 28.6 19.2 L29.8 22 V27 H20.6 Z" fill="#66759e"/><path d="M22.4 19.4 H27 L28.4 22.4 H22.4 Z" fill="#bccdf0"/><rect x="20.6" y="25.4" width="9.4" height="1.8" fill="#4a4a5a"/><circle cx="12" cy="27.8" r="2.1" fill="#222"/><circle cx="25.6" cy="27.8" r="2.1" fill="#222"/><circle cx="12" cy="27.8" r="0.8" fill="#aaa"/><circle cx="25.6" cy="27.8" r="0.8" fill="#aaa"/></svg></div>
<div class="tb" style="left:1065px;width:34px;background:#cbcbcb;border-color:#6e6e6e #9a9a9a #9a9a9a #6e6e6e;"><svg style="left:-1px;top:-1px" width="34" height="34" viewBox="0 0 34 34"><path d="M21 12 Q27.5 12 27 18 Q27 23 21 23 Q17 23.5 16 21 Z" fill="#8e8e8e"/><path d="M8 17 Q6 12 11 10.5 Q13.5 6.5 18.5 8.5 Q23.5 8 23.5 13 Q26 17.5 21.5 20.5 Q17 23 13 21 Q8.5 21.5 8 17 Z" fill="url(#gCloud)"/><path d="M27 6.8 L14.2 15 L19 16.8 L7 27.4 L25 18.2 L20 16.2 Z" fill="#f8d21c" stroke="#c89a0a" stroke-width="0.5"/></svg></div>
<div class="tb" style="left:1136px;width:34px;"><svg style="left:-1px;top:-1px" width="34" height="34" viewBox="0 0 34 34"><rect x="6.5" y="6.5" width="21.5" height="21.5" rx="2.5" fill="url(#gExit)" stroke="#a01212" stroke-width="1"/><text x="7.6" y="20.7" font-family="Liberation Sans,Arial,sans-serif" font-size="9.5" fill="#fff" textLength="19.5" lengthAdjust="spacingAndGlyphs" letter-spacing="0">EXIT</text></svg></div>
</div>
<div class="a" style="left:0;top:65px;width:1172px;height:22px">
<div class="tab sel" style="left:4px;width:90px"><svg width="90" height="22" viewBox="0 0 90 22"><path d="M0 22 L0 7 L7 0 L90 0 L90 22 Z" fill="#C64E2C"/><path d="M1.5 22 L1.5 7 L7 1.5 L89 1.5" fill="none" stroke="#fff" stroke-width="1"/><path d="M0.5 22 L0.5 6.5 L6.5 0.5 L89.5 0.5 L89.5 22" fill="none" stroke="#5f83c8" stroke-width="1"/></svg><span>Information</span></div>
<div class="tab" style="left:94px;width:82px"><svg width="82" height="22" viewBox="0 0 82 22"><path d="M0 22 L0 7 L7 0 L82 0 L82 22 Z" fill="#FB9946"/><path d="M0.5 22 L0.5 7.5 L6.8 1.5 L81 1.5" fill="none" stroke="#fff" stroke-width="1"/><path d="M0.5 6.5 L6.5 0.5 L81.5 0.5 L81.5 22" fill="none" stroke="#7088a6" stroke-width="1"/></svg><span>Customer</span></div>
<div class="tab" style="left:176px;width:76px"><svg width="76" height="22" viewBox="0 0 76 22"><path d="M0 22 L0 7 L7 0 L76 0 L76 22 Z" fill="#FB9946"/><path d="M0.5 22 L0.5 7.5 L6.8 1.5 L75 1.5" fill="none" stroke="#fff" stroke-width="1"/><path d="M0.5 6.5 L6.5 0.5 L75.5 0.5 L75.5 22" fill="none" stroke="#7088a6" stroke-width="1"/></svg><span>Contacts</span></div>
<div class="tab" style="left:252px;width:57px"><svg width="57" height="22" viewBox="0 0 57 22"><path d="M0 22 L0 7 L7 0 L57 0 L57 22 Z" fill="#FB9946"/><path d="M0.5 22 L0.5 7.5 L6.8 1.5 L56 1.5" fill="none" stroke="#fff" stroke-width="1"/><path d="M0.5 6.5 L6.5 0.5 L56.5 0.5 L56.5 22" fill="none" stroke="#7088a6" stroke-width="1"/></svg><span>Event</span></div>
<div class="tab" style="left:309px;width:60px"><svg width="60" height="22" viewBox="0 0 60 22"><path d="M0 22 L0 7 L7 0 L60 0 L60 22 Z" fill="#FB9946"/><path d="M0.5 22 L0.5 7.5 L6.8 1.5 L59 1.5" fill="none" stroke="#fff" stroke-width="1"/><path d="M0.5 6.5 L6.5 0.5 L59.5 0.5 L59.5 22" fill="none" stroke="#7088a6" stroke-width="1"/></svg><span>Dates</span></div>
<div class="tab" style="left:369px;width:86px"><svg width="86" height="22" viewBox="0 0 86 22"><path d="M0 22 L0 7 L7 0 L86 0 L86 22 Z" fill="#FB9946"/><path d="M0.5 22 L0.5 7.5 L6.8 1.5 L85 1.5" fill="none" stroke="#fff" stroke-width="1"/><path d="M0.5 6.5 L6.5 0.5 L85.5 0.5 L85.5 22" fill="none" stroke="#7088a6" stroke-width="1"/></svg><span>Schedules</span></div>
<div class="tab" style="left:455px;width:76px"><svg width="76" height="22" viewBox="0 0 76 22"><path d="M0 22 L0 7 L7 0 L76 0 L76 22 Z" fill="#FB9946"/><path d="M0.5 22 L0.5 7.5 L6.8 1.5 L75 1.5" fill="none" stroke="#fff" stroke-width="1"/><path d="M0.5 6.5 L6.5 0.5 L75.5 0.5 L75.5 22" fill="none" stroke="#7088a6" stroke-width="1"/></svg><span>Shipping</span></div>
<div class="tab" style="left:531px;width:64px"><svg width="64" height="22" viewBox="0 0 64 22"><path d="M0 22 L0 7 L7 0 L64 0 L64 22 Z" fill="#FB9946"/><path d="M0.5 22 L0.5 7.5 L6.8 1.5 L63 1.5" fill="none" stroke="#fff" stroke-width="1"/><path d="M0.5 6.5 L6.5 0.5 L63.5 0.5 L63.5 22" fill="none" stroke="#7088a6" stroke-width="1"/></svg><span>Return</span></div>
<div class="tab" style="left:595px;width:74px"><svg width="74" height="22" viewBox="0 0 74 22"><path d="M0 22 L0 7 L7 0 L74 0 L74 22 Z" fill="#FB9946"/><path d="M0.5 22 L0.5 7.5 L6.8 1.5 L73 1.5" fill="none" stroke="#fff" stroke-width="1"/><path d="M0.5 6.5 L6.5 0.5 L73.5 0.5 L73.5 22" fill="none" stroke="#7088a6" stroke-width="1"/></svg><span>Payment</span></div>
<div class="tab" style="left:669px;width:66px"><svg width="66" height="22" viewBox="0 0 66 22"><path d="M0 22 L0 7 L7 0 L66 0 L66 22 Z" fill="#FB9946"/><path d="M0.5 22 L0.5 7.5 L6.8 1.5 L65 1.5" fill="none" stroke="#fff" stroke-width="1"/><path d="M0.5 6.5 L6.5 0.5 L65.5 0.5 L65.5 22" fill="none" stroke="#7088a6" stroke-width="1"/></svg><span>Default</span></div>
<div class="tab" style="left:735px;width:53px"><svg width="53" height="22" viewBox="0 0 53 22"><path d="M0 22 L0 7 L7 0 L53 0 L53 22 Z" fill="#FB9946"/><path d="M0.5 22 L0.5 7.5 L6.8 1.5 L52 1.5" fill="none" stroke="#fff" stroke-width="1"/><path d="M0.5 6.5 L6.5 0.5 L52.5 0.5 L52.5 22" fill="none" stroke="#7088a6" stroke-width="1"/></svg><span>Cost</span></div>
<div class="tab" style="left:788px;width:79px"><svg width="79" height="22" viewBox="0 0 79 22"><path d="M0 22 L0 7 L7 0 L79 0 L79 22 Z" fill="#FB9946"/><path d="M0.5 22 L0.5 7.5 L6.8 1.5 L78 1.5" fill="none" stroke="#fff" stroke-width="1"/><path d="M0.5 6.5 L6.5 0.5 L78.5 0.5 L78.5 22" fill="none" stroke="#7088a6" stroke-width="1"/></svg><span>Sub Total</span></div>
<div class="tab" style="left:867px;width:63px"><svg width="63" height="22" viewBox="0 0 63 22"><path d="M0 22 L0 7 L7 0 L63 0 L63 22 Z" fill="#FB9946"/><path d="M0.5 22 L0.5 7.5 L6.8 1.5 L62 1.5" fill="none" stroke="#fff" stroke-width="1"/><path d="M0.5 6.5 L6.5 0.5 L62.5 0.5 L62.5 22" fill="none" stroke="#7088a6" stroke-width="1"/></svg><span>Status</span></div>
<div class="tab" style="left:930px;width:105px"><svg width="105" height="22" viewBox="0 0 105 22"><path d="M0 22 L0 7 L7 0 L105 0 L105 22 Z" fill="#FB9946"/><path d="M0.5 22 L0.5 7.5 L6.8 1.5 L104 1.5" fill="none" stroke="#fff" stroke-width="1"/><path d="M0.5 6.5 L6.5 0.5 L104.5 0.5 L104.5 22" fill="none" stroke="#7088a6" stroke-width="1"/></svg><span>Flat Discounts</span></div>
</div>
<div class="a" style="left:2px;top:87px;width:1168px;height:212px;background:#c8ddf2;border-left:1px solid #5f83c8;border-right:1px solid #7b8a9b;border-bottom:1px solid #7b8a9b;border-top:1px solid #5f83c8;box-shadow:1px 1px 0 #b9b9b9;"></div><div class="a" style="left:3px;top:88px;width:1166px;height:1px;background:#fff"></div>
<div class="a" style="left:3px;top:87px;width:90px;height:2px;background:#c8ddf2"></div>
<div class="a" style="left:4px;top:91px;width:1163px;height:205px;background:#fff"></div>
<div class="a" style="left:4px;top:91px;width:1162px;height:204px;border:1px solid #b2b2b2;border-left-color:#a9a9a9;border-top-color:#a9a9a9"></div>
<div class="t " style="left:9px;top:100px;letter-spacing:0.54px;">Number</div>
<div class="t " style="left:9px;top:128px;letter-spacing:0.3px;">Description</div>
<div class="t " style="left:9px;top:156px;letter-spacing:0.13px;">Date Created</div>
<div class="t " style="left:9px;top:184px;letter-spacing:0.0px;">Site</div>
<div class="t " style="left:9px;top:212px;letter-spacing:-0.0px;">Project Mgr.</div>
<div class="t " style="left:9px;top:240px;letter-spacing:0.27px;">Sales Person</div>
<div class="t " style="left:9px;top:268px;letter-spacing:0.2px;">Labor Planner</div>
<div class="fld " style="left:91px;top:97px;width:100px;height:24px;">ORD-1041</div>
<div class="t " style="left:204px;top:100px;letter-spacing:0.33px;">Version</div>
<div class="fld " style="left:256px;top:97px;width:88px;height:24px;">1</div>
<svg class="a" style="left:324px;top:98px" width="18" height="18" viewBox="0 0 18 18"><path d="M10.2 10.4 L15.6 15.3" stroke="#6a6a9c" stroke-width="2.8" stroke-linecap="round"/><path d="M10.8 9.6 L16.2 14.4" stroke="#ffa31f" stroke-width="2" stroke-linecap="round"/><circle cx="6.7" cy="6.3" r="4.9" fill="#c9ecff" stroke="#5f6488" stroke-width="0.9"/><circle cx="6.7" cy="6.3" r="3.9" fill="none" stroke="#b4dcfa" stroke-width="0.9"/><path d="M4.2 7.8 A3 3 0 0 0 7.4 9" stroke="#f4fcff" stroke-width="1.3" fill="none"/><path d="M7.6 3.2 A3.4 3.4 0 0 1 9.6 5" stroke="#ffffff" stroke-width="1.1" fill="none"/></svg>
<div class="fld wfld" style="left:91px;top:125px;width:256px;height:24px;"></div>
<div class="fld " style="left:91px;top:153px;width:100px;height:24px;">11/17/2017</div>
<div class="t " style="left:204px;top:156px;letter-spacing:0.21px;">Project</div>
<div class="fld wfld" style="left:256px;top:153px;width:88px;height:24px;">ORD-1041</div>
<svg class="a" style="left:324px;top:154px" width="18" height="18" viewBox="0 0 18 18"><path d="M10.2 10.4 L15.6 15.3" stroke="#6a6a9c" stroke-width="2.8" stroke-linecap="round"/><path d="M10.8 9.6 L16.2 14.4" stroke="#ffa31f" stroke-width="2" stroke-linecap="round"/><circle cx="6.7" cy="6.3" r="4.9" fill="#c9ecff" stroke="#5f6488" stroke-width="0.9"/><circle cx="6.7" cy="6.3" r="3.9" fill="none" stroke="#b4dcfa" stroke-width="0.9"/><path d="M4.2 7.8 A3 3 0 0 0 7.4 9" stroke="#f4fcff" stroke-width="1.3" fill="none"/><path d="M7.6 3.2 A3.4 3.4 0 0 1 9.6 5" stroke="#ffffff" stroke-width="1.1" fill="none"/></svg>
<div class="fld " style="left:91px;top:181px;width:100px;height:24px;letter-spacing:-0.2px">SANFRANCISCO</div>
<div class="t " style="left:204px;top:184px;letter-spacing:0.1px;">Sub Orders</div>
<div class="fld " style="left:281px;top:181px;width:65px;height:24px;">0</div>
<div class="a" style="left:91px;top:209px;width:255px;height:24px;border:1px solid #7088a6;background:#eeeeee;box-shadow:inset 0 0 0 1px #b9d0ea"></div>
<svg class="a" style="left:308px;top:211px" width="18" height="18" viewBox="0 0 18 18"><path d="M10.2 10.4 L15.6 15.3" stroke="#6a6a9c" stroke-width="2.8" stroke-linecap="round"/><path d="M10.8 9.6 L16.2 14.4" stroke="#ffa31f" stroke-width="2" stroke-linecap="round"/><circle cx="6.7" cy="6.3" r="4.9" fill="#c9ecff" stroke="#5f6488" stroke-width="0.9"/><circle cx="6.7" cy="6.3" r="3.9" fill="none" stroke="#b4dcfa" stroke-width="0.9"/><path d="M4.2 7.8 A3 3 0 0 0 7.4 9" stroke="#f4fcff" stroke-width="1.3" fill="none"/><path d="M7.6 3.2 A3.4 3.4 0 0 1 9.6 5" stroke="#ffffff" stroke-width="1.1" fill="none"/></svg>
<div class="a" style="left:326px;top:210px;width:19px;height:22px;border-left:1px solid #7088a6;background:linear-gradient(#dfe8f3,#ffffff 30%,#f4f8fc 50%,#c6d7ea)"><svg class="a" style="left:3px;top:8px" width="13" height="7" viewBox="0 0 13 7"><path d="M0.8 0.8 H11.6 L6.2 6 Z" fill="#1c1c1c"/></svg></div>
<div class="a" style="left:91px;top:237px;width:255px;height:24px;border:1px solid #7088a6;background:#eeeeee;box-shadow:inset 0 0 0 1px #b9d0ea"></div>
<svg class="a" style="left:308px;top:239px" width="18" height="18" viewBox="0 0 18 18"><path d="M10.2 10.4 L15.6 15.3" stroke="#6a6a9c" stroke-width="2.8" stroke-linecap="round"/><path d="M10.8 9.6 L16.2 14.4" stroke="#ffa31f" stroke-width="2" stroke-linecap="round"/><circle cx="6.7" cy="6.3" r="4.9" fill="#c9ecff" stroke="#5f6488" stroke-width="0.9"/><circle cx="6.7" cy="6.3" r="3.9" fill="none" stroke="#b4dcfa" stroke-width="0.9"/><path d="M4.2 7.8 A3 3 0 0 0 7.4 9" stroke="#f4fcff" stroke-width="1.3" fill="none"/><path d="M7.6 3.2 A3.4 3.4 0 0 1 9.6 5" stroke="#ffffff" stroke-width="1.1" fill="none"/></svg>
<div class="a" style="left:326px;top:238px;width:19px;height:22px;border-left:1px solid #7088a6;background:linear-gradient(#dfe8f3,#ffffff 30%,#f4f8fc 50%,#c6d7ea)"><svg class="a" style="left:3px;top:8px" width="13" height="7" viewBox="0 0 13 7"><path d="M0.8 0.8 H11.6 L6.2 6 Z" fill="#1c1c1c"/></svg></div>
<div class="fld wfld" style="left:91px;top:265px;width:255px;height:24px;"></div>
<svg class="a" style="left:326px;top:266px" width="18" height="18" viewBox="0 0 18 18"><path d="M10.2 10.4 L15.6 15.3" stroke="#6a6a9c" stroke-width="2.8" stroke-linecap="round"/><path d="M10.8 9.6 L16.2 14.4" stroke="#ffa31f" stroke-width="2" stroke-linecap="round"/><circle cx="6.7" cy="6.3" r="4.9" fill="#c9ecff" stroke="#5f6488" stroke-width="0.9"/><circle cx="6.7" cy="6.3" r="3.9" fill="none" stroke="#b4dcfa" stroke-width="0.9"/><path d="M4.2 7.8 A3 3 0 0 0 7.4 9" stroke="#f4fcff" stroke-width="1.3" fill="none"/><path d="M7.6 3.2 A3.4 3.4 0 0 1 9.6 5" stroke="#ffffff" stroke-width="1.1" fill="none"/></svg>
<div class="a" style="left:358px;top:100px;width:215px;height:98px;border:1px solid #b4b4b4"></div>
<div class="t b" style="left:363px;top:95px;background:#fff;padding:0 2px;letter-spacing:-0.17px">Charge Duration</div>
<div class="t " style="left:361px;top:113px;letter-spacing:0.03px;">Start Date/Time</div>
<div class="t " style="left:361px;top:142px;letter-spacing:0.14px;">End Date/Time</div>
<div class="t " style="left:361px;top:171px;letter-spacing:0.22px;">Duration</div>
<div class="fld " style="left:450px;top:110px;width:120px;height:24px;padding-left:1px;letter-spacing:0">11/18/2017 09:00 AM</div>
<div class="fld " style="left:450px;top:139px;width:120px;height:24px;padding-left:1px;letter-spacing:0">11/20/2017 09:00 AM</div>
<div class="fld " style="left:450px;top:168px;width:85px;height:24px;">2d</div>
<div class="t " style="left:580px;top:115px;letter-spacing:0.06px;">Conv. Date</div>
<div class="fld " style="left:647px;top:110px;width:89px;height:24px;"></div>
<div class="cb cbf" style="left:581px;top:144px"><svg class="a" style="left:0;top:0" width="10" height="10" viewBox="0 0 10 10"><path d="M2 4 L3.6 4 L4.2 6 L8 2 L9 2 L9 3 L4.6 8.6 L3 8.6 Z" fill="#1c2630"/></svg></div>
<div class="t " style="left:598px;top:144px;letter-spacing:0.23px;">Show Suggestions</div>
<div class="cb cbf" style="left:581px;top:168px"></div>
<div class="t " style="left:598px;top:168px;letter-spacing:-0.04px;">Event Pricing</div>
<div class="t " style="left:354px;top:211px;letter-spacing:0.38px;">Customer</div>
<div class="t " style="left:354px;top:239px;letter-spacing:0.14px;">Contact</div>
<div class="t " style="left:354px;top:268px;letter-spacing:0.22px;">Contact Tel #</div>
<div class="fld " style="left:413px;top:205px;width:160px;height:24px;">JBL</div>
<svg class="a" style="left:553px;top:206px" width="18" height="18" viewBox="0 0 18 18"><path d="M10.2 10.4 L15.6 15.3" stroke="#6a6a9c" stroke-width="2.8" stroke-linecap="round"/><path d="M10.8 9.6 L16.2 14.4" stroke="#ffa31f" stroke-width="2" stroke-linecap="round"/><circle cx="6.7" cy="6.3" r="4.9" fill="#c9ecff" stroke="#5f6488" stroke-width="0.9"/><circle cx="6.7" cy="6.3" r="3.9" fill="none" stroke="#b4dcfa" stroke-width="0.9"/><path d="M4.2 7.8 A3 3 0 0 0 7.4 9" stroke="#f4fcff" stroke-width="1.3" fill="none"/><path d="M7.6 3.2 A3.4 3.4 0 0 1 9.6 5" stroke="#ffffff" stroke-width="1.1" fill="none"/></svg>
<div class="fld " style="left:413px;top:234px;width:160px;height:24px;letter-spacing:-0.14px">MARK C WEBBER</div>
<svg class="a" style="left:553px;top:235px" width="18" height="18" viewBox="0 0 18 18"><path d="M10.2 10.4 L15.6 15.3" stroke="#6a6a9c" stroke-width="2.8" stroke-linecap="round"/><path d="M10.8 9.6 L16.2 14.4" stroke="#ffa31f" stroke-width="2" stroke-linecap="round"/><circle cx="6.7" cy="6.3" r="4.9" fill="#c9ecff" stroke="#5f6488" stroke-width="0.9"/><circle cx="6.7" cy="6.3" r="3.9" fill="none" stroke="#b4dcfa" stroke-width="0.9"/><path d="M4.2 7.8 A3 3 0 0 0 7.4 9" stroke="#f4fcff" stroke-width="1.3" fill="none"/><path d="M7.6 3.2 A3.4 3.4 0 0 1 9.6 5" stroke="#ffffff" stroke-width="1.1" fill="none"/></svg>
<div class="fld " style="left:443px;top:263px;width:129px;height:24px;">4232212</div>
<div class="t " style="left:579px;top:210px;letter-spacing:0.22px;">Bill To</div>
<div class="t " style="left:579px;top:239px;letter-spacing:0.13px;">Bill Contact</div>
<div class="t " style="left:579px;top:268px;letter-spacing:0.23px;">Language</div>
<div class="fld " style="left:646px;top:205px;width:160px;height:24px;">JBL</div>
<svg class="a" style="left:786px;top:206px" width="18" height="18" viewBox="0 0 18 18"><path d="M10.2 10.4 L15.6 15.3" stroke="#6a6a9c" stroke-width="2.8" stroke-linecap="round"/><path d="M10.8 9.6 L16.2 14.4" stroke="#ffa31f" stroke-width="2" stroke-linecap="round"/><circle cx="6.7" cy="6.3" r="4.9" fill="#c9ecff" stroke="#5f6488" stroke-width="0.9"/><circle cx="6.7" cy="6.3" r="3.9" fill="none" stroke="#b4dcfa" stroke-width="0.9"/><path d="M4.2 7.8 A3 3 0 0 0 7.4 9" stroke="#f4fcff" stroke-width="1.3" fill="none"/><path d="M7.6 3.2 A3.4 3.4 0 0 1 9.6 5" stroke="#ffffff" stroke-width="1.1" fill="none"/></svg>
<div class="fld " style="left:646px;top:234px;width:160px;height:24px;letter-spacing:-0.14px">MARK C WEBBER</div>
<svg class="a" style="left:786px;top:235px" width="18" height="18" viewBox="0 0 18 18"><path d="M10.2 10.4 L15.6 15.3" stroke="#6a6a9c" stroke-width="2.8" stroke-linecap="round"/><path d="M10.8 9.6 L16.2 14.4" stroke="#ffa31f" stroke-width="2" stroke-linecap="round"/><circle cx="6.7" cy="6.3" r="4.9" fill="#c9ecff" stroke="#5f6488" stroke-width="0.9"/><circle cx="6.7" cy="6.3" r="3.9" fill="none" stroke="#b4dcfa" stroke-width="0.9"/><path d="M4.2 7.8 A3 3 0 0 0 7.4 9" stroke="#f4fcff" stroke-width="1.3" fill="none"/><path d="M7.6 3.2 A3.4 3.4 0 0 1 9.6 5" stroke="#ffffff" stroke-width="1.1" fill="none"/></svg>
<div class="fld " style="left:646px;top:263px;width:90px;height:24px;"></div>
<svg class="a" style="left:716px;top:264px" width="18" height="18" viewBox="0 0 18 18"><path d="M10.4 10 L16 14.8" stroke="#c2c2c2" stroke-width="2.8" stroke-linecap="round"/><circle cx="6.7" cy="6.3" r="4.9" fill="#d6d6d6" stroke="#c0c0c0" stroke-width="1.1"/><path d="M3.9 5.4 A3.2 3.2 0 0 1 7.2 3.3" stroke="#f8f8f8" stroke-width="1.2" fill="none"/></svg>
<div class="a" style="left:746px;top:95px;width:300px;height:22px">
<div class="tab sel" style="left:0;width:90px"><svg width="90" height="22" viewBox="0 0 90 22"><path d="M0 22 L0 7 L7 0 L90 0 L90 22 Z" fill="#C64E2C"/><path d="M1.5 22 L1.5 7 L7 1.5 L89 1.5" fill="none" stroke="#fff" stroke-width="1"/><path d="M0.5 22 L0.5 6.5 L6.5 0.5 L89.5 0.5 L89.5 22" fill="none" stroke="#5f83c8" stroke-width="1"/></svg><span style="left:6px">Comments</span></div>
<div class="tab" style="left:90px;width:120px"><svg width="120" height="22" viewBox="0 0 120 22"><path d="M0 22 L0 7 L7 0 L120 0 L120 22 Z" fill="#FB9946"/><path d="M0.5 22 L0.5 7.5 L6.8 1.5 L119 1.5" fill="none" stroke="#fff" stroke-width="1"/><path d="M0.5 6.5 L6.5 0.5 L119.5 0.5 L119.5 22" fill="none" stroke="#7088a6" stroke-width="1"/></svg><span style="left:5px">LaborComments</span></div>
</div>
<div class="a" style="left:744px;top:117px;width:290px;height:83px;background:#c8ddf2;border-left:1px solid #5f83c8;border-right:1px solid #7b8a9b;border-bottom:1px solid #7b8a9b;border-top:1px solid #5f83c8;"></div><div class="a" style="left:745px;top:118px;width:288px;height:1px;background:#fff"></div>
<div class="a" style="left:745px;top:117px;width:91px;height:2px;background:#c8ddf2"></div>
<div class="a" style="left:746px;top:121px;width:285px;height:76px;background:#fff"></div>
<div class="a" style="left:746px;top:121px;width:284px;height:75px;border:1px solid #b2b2b2;border-left-color:#a9a9a9;border-top-color:#a9a9a9"></div>
<div class="a" style="left:753px;top:123px;width:269px;height:69px;border:1px solid #6a83a0;background:#eeeeee;box-shadow:inset 0 0 0 1px #808080, inset -2px -2px 0 #fff"></div>
<svg class="a" style="left:1002px;top:125px" width="18" height="18" viewBox="0 0 18 18"><path d="M10.2 10.4 L15.6 15.3" stroke="#6a6a9c" stroke-width="2.8" stroke-linecap="round"/><path d="M10.8 9.6 L16.2 14.4" stroke="#ffa31f" stroke-width="2" stroke-linecap="round"/><circle cx="6.7" cy="6.3" r="4.9" fill="#c9ecff" stroke="#5f6488" stroke-width="0.9"/><circle cx="6.7" cy="6.3" r="3.9" fill="none" stroke="#b4dcfa" stroke-width="0.9"/><path d="M4.2 7.8 A3 3 0 0 0 7.4 9" stroke="#f4fcff" stroke-width="1.3" fill="none"/><path d="M7.6 3.2 A3.4 3.4 0 0 1 9.6 5" stroke="#ffffff" stroke-width="1.1" fill="none"/></svg>
<div class="t " style="left:818px;top:217px;letter-spacing:0.16px;">Document Folder:</div>
<div class="a" style="left:1006px;top:209px;width:49px;height:23px;border:1px solid #c4c4c4;background:#fff"></div>
<div class="a" style="left:1016px;top:211px;width:30px;height:19px;border:1px solid #555;background:#fff;font-size:10.5px;line-height:17px;text-align:center;letter-spacing:-0.15px;color:#000">Reset</div>
<div class="a" style="left:818px;top:233px;width:216px;height:49px;border:1px solid #6a83a0;background:#eeeeee;box-shadow:inset 0 0 0 1px #808080, inset -2px -2px 0 #fff"></div>
<div class="a" style="left:0;top:303px;width:300px;height:22px">
<div class="tab sel" style="left:2px;width:67px"><svg width="67" height="22" viewBox="0 0 67 22"><path d="M0 22 L0 7 L7 0 L67 0 L67 22 Z" fill="#C64E2C"/><path d="M1.5 22 L1.5 7 L7 1.5 L66 1.5" fill="none" stroke="#fff" stroke-width="1"/><path d="M0.5 22 L0.5 6.5 L6.5 0.5 L66.5 0.5 L66.5 22" fill="none" stroke="#5f83c8" stroke-width="1"/></svg><span>Item(s)</span></div>
<div class="tab" style="left:69px;width:58px"><svg width="58" height="22" viewBox="0 0 58 22"><path d="M0 22 L0 7 L7 0 L58 0 L58 22 Z" fill="#FB9946"/><path d="M0.5 22 L0.5 7.5 L6.8 1.5 L57 1.5" fill="none" stroke="#fff" stroke-width="1"/><path d="M0.5 6.5 L6.5 0.5 L57.5 0.5 L57.5 22" fill="none" stroke="#7088a6" stroke-width="1"/></svg><span>Labor</span></div>
</div>
<div class="a" style="left:0px;top:325px;width:1172px;height:315px;background:#c8ddf2;border-left:1px solid #5f83c8;border-right:1px solid #7b8a9b;border-bottom:1px solid #7b8a9b;border-top:1px solid #5f83c8;"></div><div class="a" style="left:1px;top:326px;width:1170px;height:1px;background:#fff"></div>
<div class="a" style="left:3px;top:325px;width:65px;height:2px;background:#c8ddf2"></div>
<div class="a" style="left:2px;top:329px;width:1167px;height:308px;background:#fff"></div>
<div class="a" style="left:2px;top:329px;width:1166px;height:307px;border:1px solid #b2b2b2;border-left-color:#a9a9a9;border-top-color:#a9a9a9"></div>
<div class="a" style="left:4px;top:331px;width:1162px;height:303px;border:1px solid #7088a6"></div>
<div class="a" style="left:5px;top:332px;width:1160px;height:20px;background:#ff7440"></div>
<div class="a" style="left:5px;top:352px;width:1160px;height:19px;background:#FC9946;border-bottom:1px solid #b9733c"></div>
<div class="a" style="left:0;top:332px;width:1172px;height:40px">
<div class="th" style="left:5px;width:14px">C</div>
<div class="td" style="left:5px;width:15px;"></div>
<div class="th" style="left:20px;width:19px">L</div>
<div class="td" style="left:20px;width:20px;"></div>
<div class="th" style="left:40px;width:14px">T</div>
<div class="td" style="left:40px;width:15px;"></div>
<div class="th" style="left:55px;width:14px">S</div>
<div class="td" style="left:55px;width:15px;"></div>
<div class="th" style="left:70px;width:74px">Status</div>
<div class="td" style="left:70px;width:75px;">Reserved</div>
<div class="th" style="left:145px;width:44px">Action</div>
<div class="td" style="left:145px;width:45px;">Rent</div>
<div class="th" style="left:190px;width:99px">Product ID</div>
<div class="td" style="left:190px;width:100px;">JBLHS21-01</div>
<div class="th" style="left:290px;width:104px">Description</div>
<div class="td" style="left:290px;width:105px;padding-left:7px;">JBLHS21</div>
<div class="th" style="left:395px;width:54px">Duration</div>
<div class="td" style="left:395px;width:55px;">2d</div>
<div class="th" style="left:450px;width:29px">Qty</div>
<div class="td r" style="left:450px;width:30px;">1</div>
<div class="th" style="left:480px;width:59px">Unit Price</div>
<div class="td r" style="left:480px;width:60px;">100.00</div>
<div class="th" style="left:540px;width:54px">Discount</div>
<div class="td r" style="left:540px;width:55px;">0.00</div>
<div class="th" style="left:595px;width:59px">Net Disc</div>
<div class="td r" style="left:595px;width:60px;">0.00</div>
<div class="th" style="left:655px;width:59px">Net Each</div>
<div class="td r" style="left:655px;width:60px;">100.00</div>
<div class="th" style="left:715px;width:74px">Amount</div>
<div class="td r" style="left:715px;width:75px;">30.00</div>
<div class="th" style="left:790px;width:39px">Unit</div>
<div class="td" style="left:790px;width:40px;">Day</div>
<div class="th" style="left:830px;width:29px">DIW</div>
<div class="td r" style="left:830px;width:30px;">7.00</div>
<div class="th" style="left:860px;width:49px">DIM</div>
<div class="td r" style="left:860px;width:50px;">28.00</div>
<div class="th" style="left:910px;width:119px">Start Date</div>
<div class="td" style="left:910px;width:120px;letter-spacing:0.03px;padding-left:3.5px;">11/18/2017 09:00 AM</div>
<div class="th" style="left:1030px;width:14px">X</div>
<div class="td" style="left:1030px;width:15px;"></div>
<div class="th" style="left:1045px;width:119px">End Date</div>
<div class="td" style="left:1045px;width:120px;letter-spacing:0.03px;padding-left:3.5px;">11/20/2017 09:00 AM</div>
<div class="cb" style="left:6px;top:23px"></div>
<div class="cb" style="left:23px;top:23px"></div>
<div class="cb" style="left:41px;top:23px"><svg class="a" style="left:0;top:0" width="10" height="10" viewBox="0 0 10 10"><path d="M2 4 L3.6 4 L4.2 6 L8 2 L9 2 L9 3 L4.6 8.6 L3 8.6 Z" fill="#1c2630"/></svg></div>
<div class="cb" style="left:56px;top:23px"></div>
<div class="cb" style="left:1032px;top:23px"></div>
</div>
<div class="a" style="left:189px;top:333px;width:101px;height:39px;border:2px solid #c0101a"></div>
<div class="a" style="left:655px;top:352px;width:59px;height:18px;border:1px solid #e8201a"></div>
<div class="a" style="left:5px;top:616px;width:1160px;height:16px;background:#eeeeee;border-top:1px solid #7088a6;border-bottom:1px solid #7088a6;box-shadow:inset 0 1px 0 #fff"></div>
<div class="a" style="left:5px;top:616px;width:16px;height:16px;border:1px solid #7088a6;background:#eeeeee;box-shadow:inset 1px 1px 0 #fff"><svg class="a" style="left:4px;top:3px" width="6" height="9" viewBox="0 0 6 9"><path d="M5.2 0.3 V8.7 L0.6 4.5 Z" fill="#222"/></svg></div>
<div class="a" style="left:1148px;top:616px;width:16px;height:16px;border:1px solid #7088a6;background:#eeeeee;box-shadow:inset 1px 1px 0 #fff"><svg class="a" style="left:5px;top:3px" width="6" height="9" viewBox="0 0 6 9"><path d="M0.8 0.3 V8.7 L5.4 4.5 Z" fill="#222"/></svg></div>
<div class="a" style="left:20px;top:616px;width:449px;height:16px;border:1px solid #fbc018;background:linear-gradient(#f3c6a8,#eda67e 55%,#e9986c);box-shadow:inset 1px 1px 0 #e8925e"><div class="a" style="left:221px;top:4px;width:5px;height:7px;border-left:1px solid #c3c3d6;border-right:1px solid #c3c3d6"><div class="a" style="left:1px;top:0;width:1px;height:7px;background:#c3c3d6"></div></div></div>
<div class="tot" style="left:62px;top:647px">Items</div>
<div class="tot" style="left:227px;top:647px">Labor</div>
<div class="tot" style="left:438px;top:647px">Sub Total</div>
<div class="tot" style="left:628px;top:647px">Tax</div>
<div class="a" style="left:805px;top:642px;width:89px;height:23px;border:1px solid #c4c4c4;background:#fff"></div>
<div class="tot" style="left:834px;top:647px">Total</div>
<div class="fld" style="left:112px;top:642px;width:100px;height:24px;font-weight:bold;font-size:14px;letter-spacing:0;padding:3px 0 0 0;line-height:16px;color:#222">30.00</div>
<div class="fld" style="left:279px;top:642px;width:100px;height:24px;font-weight:bold;font-size:14px;letter-spacing:0;padding:3px 0 0 0;line-height:16px;color:#222"></div>
<div class="fld" style="left:517px;top:642px;width:100px;height:24px;font-weight:bold;font-size:14px;letter-spacing:0;padding:3px 0 0 0;line-height:16px;color:#222">30.00</div>
<div class="fld" style="left:662px;top:642px;width:100px;height:24px;font-weight:bold;font-size:14px;letter-spacing:0;padding:3px 0 0 0;line-height:16px;color:#222"></div>
<div class="fld" style="left:898px;top:642px;width:100px;height:24px;font-weight:bold;font-size:14px;letter-spacing:0;padding:3px 0 0 0;line-height:16px;color:#222">30.00</div>
<div class="a" style="left:1px;top:677px;width:1170px;height:23px;border:1px solid #808080;border-right-color:#b8bcbc;border-bottom-color:#b8bcbc;background:#fff"></div>
<div class="a" style="left:1px;top:676px;width:1170px;height:1px;background:#d8d8d8"></div>
</div>
</body></html>
